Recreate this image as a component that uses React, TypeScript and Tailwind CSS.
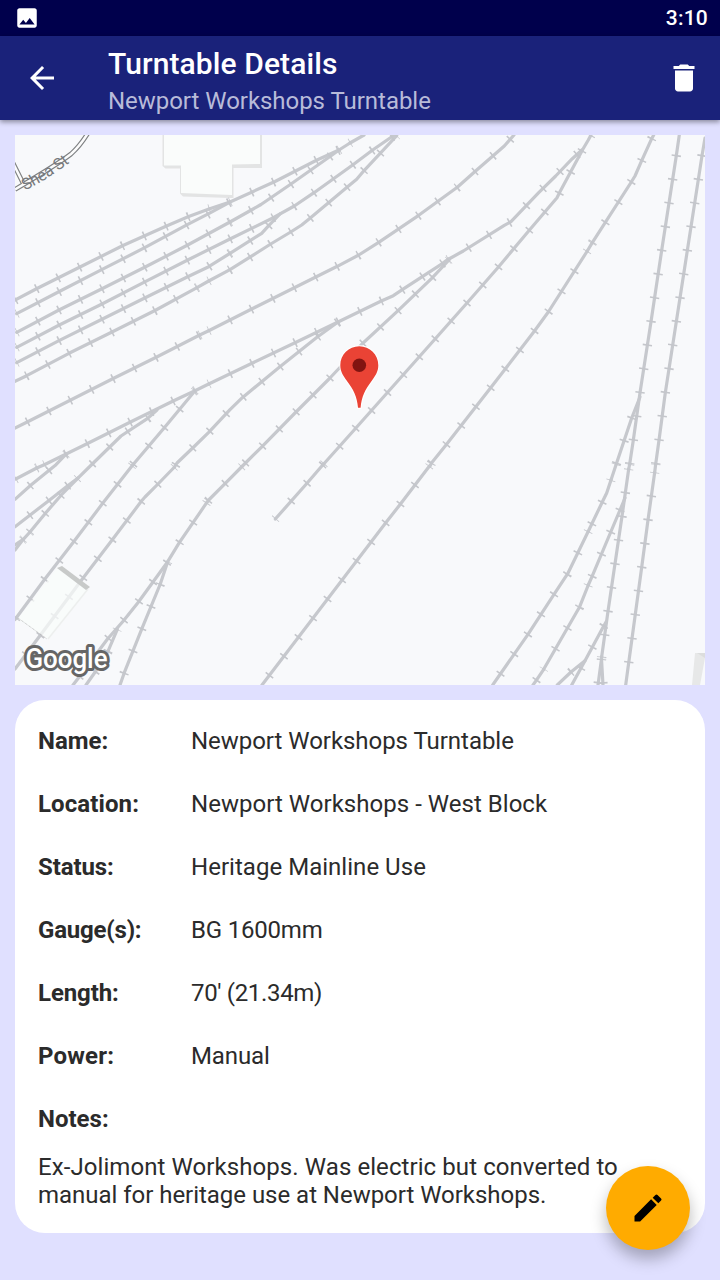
import React from "react";
import { MdArrowBack, MdDelete, MdEdit, MdImage } from "react-icons/md";

type Run = [points: string, phase?: number];

// Rail runs; the optional number is the distance to the first sleeper.
const runs: Run[] = [
  ["15,300 37,288.5 80,267 123,245.5 166.5,226 188.7,216.5 209,209", 24.6],
  ["209,209 230,202"],
  ["230,202 275,181.5 317,160 339,150"],
  ["339,150 350,143"],
  ["350,143 364,135"],
  ["16.7,313.7 59.3,291.5 101.7,269.7 144.7,247.7 187.3,224.7 208.7,213.7 230,202"],
  ["16.7,332.3 59,310 102,288.7 144.7,267.3 187.7,245 230,222"],
  ["230,222 250.5,210.5 261,204.5 291,184 330,156.5 339,150"],
  ["16.7,347.3 59.3,325 102,304 145.3,281.7 187.7,260 230,239 273.3,217.7 294.3,206 314,192.7 353,164.7 372.3,150.3 393,136 395,135"],
  ["16.7,362.7 59,340.7 102,319.3 144.7,298 187.7,276.7 208.7,266.7 230,253.3"],
  ["230,253.3 261.7,233.3 268.7,225.7 280,214"],
  ["15,381.3 26.7,375.7 69,353.3 112,332 155,310.5 197,287.7", 13],
  ["208.7,281 230,269.7 270.7,244 290.7,232 301.7,225 310.3,218 347.3,187 356.7,179.3 364.3,170.3 396.7,135.7"],
  ["197,287.7 208.7,281"],
  ["15,428 27.7,421.7 70.7,400 113.7,378.3 156.7,357 199.7,335", 14],
  ["199.7,335 208.7,330.7"],
  ["208.7,330.7 251.7,309 294.3,287.7 337.3,266.3 358.7,255 378.7,242.3 418.7,215.3 457.3,187.3 475.3,171.3 493.7,155.3 504.3,146 514,135"],
  ["15.7,479 36.7,468"],
  ["36.7,468 44.3,464.7"],
  ["44.3,464.7 88,443.3 131,421.7 173.7,400.7 195,390.7"],
  ["195,390.7 208.7,384"],
  ["208.7,384 252,363.3 295,342.7 338,322 381.3,301 393.3,295.7 402.3,289.7 442.7,263.3 447,260 449,259"],
  ["448,259.5 463.3,251 504.3,225.3 511,221.7 538.7,192.7 555.7,176 572.3,158.7 583,149 588.3,140 591,135"],
  ["275.3,519 307,483.3 322.7,465 323.7,464"],
  ["323.7,464 355.7,428.3 387.7,392.3 435.3,338.7 467,303 498.7,266.7 529.7,229.7 557,197.7 559.7,192.3 582.3,150.3"],
  ["449,260 431.7,278.3 397,311.7 362,344 329,379 295,413 261.3,447.3 244.5,464 242,466.5"],
  ["242,466.5 225.3,483.3 208.7,500 206.7,502.7"],
  ["206.7,502.7 179.3,542.7 167.7,561.7 138.3,602.3 123.3,621 107.3,639.3 79,677.3 73,685"],
  ["167.7,561.7 160.3,584 142,628.3 124.3,672.7 120,685"],
  ["117.3,629.3 107.7,652 95,672.3 86,685"],
  ["338,322 317.3,337 279.3,367.3 242.3,397.7 230,409.7 208.7,432.3 193.7,447 177,463 174.5,467", 1],
  ["174.5,467 158,484 145,497 141.3,501.3 112.3,539.7 83.3,577.7 40.3,635.3 15,669"],
  ["195,390.7 164.3,427.7 132.3,465.5"],
  ["132.3,465.5 102.7,503.3 73.7,541.7 44.7,579.3 15,619.5"],
  ["157,410 147.7,418.3 121,436 92.3,464 77.7,478.3", 12.4],
  ["77.7,478.3 67.7,485.7 48.7,500.7 15,526.7", 12.4],
  ["77.7,478.3 61.3,495 45,513.7 30,532"],
  ["30,532 23.3,539.3"],
  ["23.3,539.3 15,550"],
  ["23.3,539.3 15,545"],
  ["66.3,454 56,464.7 30.7,485.3 15,499.3"],
  ["653.7,135 651.7,138.7 641.7,160.7 635,176 631.3,182 592.3,242.7", 4.2],
  ["587.3,251 548.3,312 534.3,331.3 490.3,388.3 446,445 431.5,463 430,466"],
  ["592.3,242.7 587.3,251"],
  ["429.5,466 399.7,505 385,523.7 262,685"],
  ["679.3,135 676.3,155.7 669,203 661.7,250.3 651,321.7 640,392.7 633.3,440.3 629.7,464", 20.9],
  ["629.7,464 628.7,469"],
  ["628.7,469 622,516.3 608,611.3 601.7,656.7"],
  ["601.7,656.7 601.5,659"],
  ["601.5,659 598,685"],
  ["601.5,659 603,685"],
  ["705,138 702,155.7 683.7,274 676.3,321.7 665.3,392.7 659,440.3 655.7,464", 17.9],
  ["655.7,464 654.7,472.3"],
  ["654.7,472.3 648,520 641.7,567.3 628.7,662.7 625.7,685"],
  ["640,397 631.7,418 616.3,464", 22.5],
  ["616.3,464 611,480"],
  ["611,480 606.7,493 602.3,502 588.3,531.3"],
  ["588.3,531.3 567.7,573.7 554,594.3 528,634.3 492.7,685"],
  ["625,498 620,510 592,576.7 588.3,585", 13],
  ["588.3,585 579.7,606.7 543.7,669.3"],
  ["543.7,669.3 536.3,680.3 533,685", 13],
  ["606.3,621.7 603.7,626 585,660.7 571.7,685", 5],
  ["585,660.7 571,672 557.3,685", 18],
];

function RailMap() {
  return (
    <svg viewBox="15 135 690 550" className="block h-[550px] w-[690px] bg-[#f8f9fb]">
      <path d="M162.500 135v31l3 2.500h14.500v25l3 3 47 1.500h3.500v-30h28.500V135z" fill="#e3e4e4" />
      <path d="M164 135v30.500h17v27.500l51 2v-30.500l28-0.500V135z" fill="#fafcfb" />
      <g fill="none">
        <path d="M88 133q-8 13-17 21-13 10-56 35.500M13 163l11 22" stroke="#7e8082" strokeWidth="4.800" />
        <path d="M88 133q-8 13-17 21-13 10-56 35.500M13 163l11 22" stroke="#fcfcfc" strokeWidth="2.500" />
        {runs.map(([points], i) => (
          <polyline key={i} points={points} stroke="#c6c8cd" strokeWidth="3.200" strokeLinejoin="round" strokeLinecap="round" />
        ))}
        {runs.map(([points, phase = 0], i) => (
          <polyline
            key={i}
            points={points}
            stroke="#c4c6cb"
            strokeWidth="9.400"
            strokeDasharray="1.6 22.35"
            strokeDashoffset={0.8 - phase}
          />
        ))}
      </g>
      <path d="M57 568l31 21-40 50-30-20z" fill="#fafcfb" fillOpacity=".72" />
      <path d="M88 589l-40 50" stroke="#edefee" strokeWidth="1.500" />
      <path d="M18 618l29 21" stroke="#aaa" strokeWidth=".7" strokeDasharray="1 .7" />
      <path d="M57 568l5-2 28 21-4 3z" fill="#c8cac9" />
      <path d="M695 653h10v5l-5 27h-8z" fill="#e7e8e8" />
      <path d="M697 653h8v5z" fill="#dcdddd" />
      <path id="street" d="M25 190.500Q48 179.500 75 158.500" fill="none" />
      <text fontFamily="Roboto, sans-serif" fontSize="16" fill="#77797c">
        <textPath href="#street" textLength="53">
          Shea St
        </textPath>
      </text>
      <path
        d="M359.300 346.300c-10.500 0-19 8.300-19 19 0 6 2.500 10 6.500 15.500 6.500 8.500 10.300 15.700 11.200 27h2.600c.9-11.300 4.700-18.500 11.200-27 4-5.500 6.500-9.500 6.500-15.500 0-10.700-8.500-19-19-19z"
        fill="#ea4335"
        stroke="#fff"
        strokeWidth="2"
        paintOrder="stroke"
      />
      <circle cx="359.300" cy="365.300" r="6.800" fill="#811411" />
      <text
        x="25.500"
        y="667.500"
        textLength="82"
        lengthAdjust="spacingAndGlyphs"
        fontFamily="Roboto, sans-serif"
        fontWeight="500"
        fontSize="27"
        fill="#fff"
        stroke="#666"
        strokeWidth="6"
        strokeLinejoin="round"
        paintOrder="stroke"
      >
        Google
      </text>
    </svg>
  );
}

const details = [
  ["Name:", "Newport Workshops Turntable", "", "tracking-[-0.04px]"],
  ["Location:", "Newport Workshops - West Block", "tracking-[0.1px]", "tracking-[0.03px]"],
  ["Status:", "Heritage Mainline Use", "tracking-[-0.1px]", "tracking-[0.03px]"],
  ["Gauge(s):", "BG 1600mm", "tracking-[-0.2px]", "tracking-[-0.2px]"],
  ["Length:", "70' (21.34m)", "tracking-[-0.1px]", "tracking-[-0.33px]"],
  ["Power:", "Manual", "tracking-[0.2px]", "tracking-[-0.1px]"],
  ["Notes:", "", "", ""],
];

export default function App() {
  return (
    <div className="relative flex h-[1280px] w-[720px] flex-col overflow-hidden bg-[#e0e0ff] font-['Roboto',sans-serif] text-[#2b2b2b]">
      <div className="flex h-9 shrink-0 items-center justify-between bg-[#00004c] pr-3 pl-[14px] text-white">
        <MdImage size={26} />
        <span className="pt-px text-[21px] leading-[35px] font-medium tracking-[0.2px]">3:10</span>
      </div>
      <header className="z-10 flex h-[84px] shrink-0 items-center bg-[#1a227a] pr-[18px] pl-6 text-white shadow-[0_2px_5px_rgba(0,0,0,0.4)]">
        <MdArrowBack size={36} />
        <div className="ml-12 flex grow flex-col pt-2">
          <h1 className="text-[30px] leading-[38px] font-medium tracking-[0.1px]">Turntable Details</h1>
          <p className="text-2xl leading-9 tracking-[-0.04px] text-[#b8bbd9]">Newport Workshops Turntable</p>
        </div>
        <MdDelete size={36} />
      </header>
      <main className="flex flex-col gap-[15px] p-[15px]">
        <RailMap />
        <section className="h-[533px] rounded-[30px] bg-white px-[23px] pt-[9px] text-2xl">
          <dl>
            {details.map(([label, value, labelTracking, valueTracking]) => (
              <div key={label} className="flex h-[63px] items-center">
                <dt className={`w-[153px] font-bold ${labelTracking}`}>{label}</dt>
                <dd className={valueTracking}>{value}</dd>
              </div>
            ))}
          </dl>
          <p className="mt-[3px] leading-7 whitespace-nowrap">
            <span className="tracking-[0.08px]">Ex-Jolimont Workshops. Was electric but converted to</span>
            <br />
            <span className="tracking-[-0.03px]">manual for heritage use at Newport Workshops.</span>
          </p>
        </section>
      </main>
      <button
        aria-label="Edit"
        className="absolute right-[30px] bottom-[30px] flex size-21 items-center justify-center rounded-full bg-[#ffab00] text-black shadow-[0_9px_16px_rgba(0,0,0,0.28)]"
      >
        <MdEdit size={36} />
      </button>
    </div>
  );
}
